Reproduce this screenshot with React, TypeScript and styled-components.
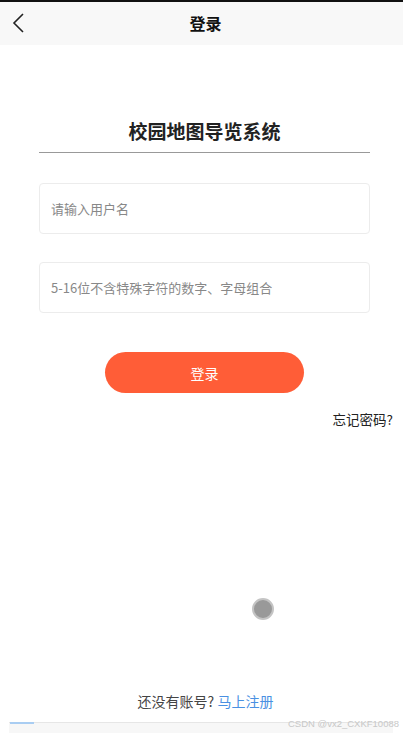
import styled, { createGlobalStyle } from "styled-components";

const GlobalStyle = createGlobalStyle`
  html, body {
    margin: 0;
    padding: 0;
    background: #fff;
  }
  * {
    box-sizing: border-box;
  }
  body {
    font-family: "Noto Sans CJK SC", "Liberation Sans", sans-serif;
  }
`;

const Page = styled.div`
  position: relative;
  height: 733px;
  display: flex;
  flex-direction: column;
  overflow: hidden;
  background: #fff;
`;

const Header = styled.div`
  height: 45px;
  border-top: 2px solid #111;
  background: #f8f8f8;
  display: flex;
  align-items: center;
  justify-content: center;
  position: relative;
  padding-left: 8px;
`;

const BackButton = styled.button`
  position: absolute;
  left: 8px;
  top: 9px;
  width: 20px;
  height: 24px;
  border: none;
  background: none;
  padding: 0;
  display: flex;
  align-items: center;
  justify-content: center;
`;

const HeaderTitle = styled.div`
  font-size: 16px;
  font-weight: 700;
  color: #111;
  line-height: 20px;
  margin-top: -2px;
`;

const Form = styled.div`
  display: flex;
  flex-direction: column;
  margin: 0 33px 0 39px;
`;

const Title = styled.h1`
  margin: 73px 0 0;
  font-size: 19px;
  line-height: 26px;
  font-weight: 700;
  color: #222;
  text-align: center;
  padding-bottom: 8px;
  border-bottom: 1px solid #999;
`;

const Field = styled.input<{ $gap: number }>`
  margin-top: ${(p) => p.$gap}px;
  height: 51px;
  border: 1px solid #ececec;
  border-radius: 4px;
  padding: 0 11px;
  font-family: inherit;
  font-size: 13px;
  color: #333;
  outline: none;
  &::placeholder {
    color: #888;
  }
`;

const LoginButton = styled.button`
  align-self: center;
  margin-top: 39px;
  width: 199px;
  height: 41px;
  border: none;
  border-radius: 21px;
  background: #ff5d37;
  color: #fff;
  font-family: inherit;
  font-size: 14px;
`;

const Forgot = styled.div`
  align-self: flex-end;
  margin: 17px -23px 0 0;
  font-size: 13.5px;
  line-height: 18px;
  color: #222;
`;

const TouchDot = styled.div`
  position: absolute;
  left: 252px;
  top: 598px;
  width: 22px;
  height: 22px;
  border-radius: 50%;
  background: #999;
  border: 2px solid #c4c4c4;
`;

const Footer = styled.div`
  margin-top: auto;
  text-align: center;
  font-size: 14px;
  line-height: 18px;
  color: #444;
  padding-left: 8px;
`;

const RegisterLink = styled.span`
  color: #4a90e2;
`;

const BottomBar = styled.div`
  margin-top: 12px;
  height: 11px;
  background: #f7f7f7;
  position: relative;
  border-top: 1px solid #e6e6e6;
  margin-left: 9px;
  margin-right: 10px;
`;

const Progress = styled.div`
  position: absolute;
  left: 1px;
  top: -1px;
  width: 24px;
  height: 2px;
  background: #a9cdf2;
`;

const Watermark = styled.div`
  position: absolute;
  right: 4px;
  bottom: 4px;
  font-family: "Liberation Sans", sans-serif;
  font-size: 9.5px;
  color: #c8c8c8;
`;

export default function App() {
  return (
    <Page>
      <GlobalStyle />
      <Header>
        <BackButton aria-label="返回">
          <svg width="14" height="20" viewBox="0 0 14 20">
            <path d="M12 1 L3 10 L12 19" fill="none" stroke="#222" strokeWidth="1.6" />
          </svg>
        </BackButton>
        <HeaderTitle>登录</HeaderTitle>
      </Header>
      <Form>
        <Title>校园地图导览系统</Title>
        <Field $gap={30} placeholder="请输入用户名" />
        <Field $gap={28} type="password" placeholder="5-16位不含特殊字符的数字、字母组合" />
        <LoginButton>登录</LoginButton>
        <Forgot>忘记密码?</Forgot>
      </Form>
      <TouchDot />
      <Footer>
        还没有账号? <RegisterLink>马上注册</RegisterLink>
      </Footer>
      <BottomBar>
        <Progress />
      </BottomBar>
      <Watermark>CSDN @vx2_CXKF10088</Watermark>
    </Page>
  );
}
